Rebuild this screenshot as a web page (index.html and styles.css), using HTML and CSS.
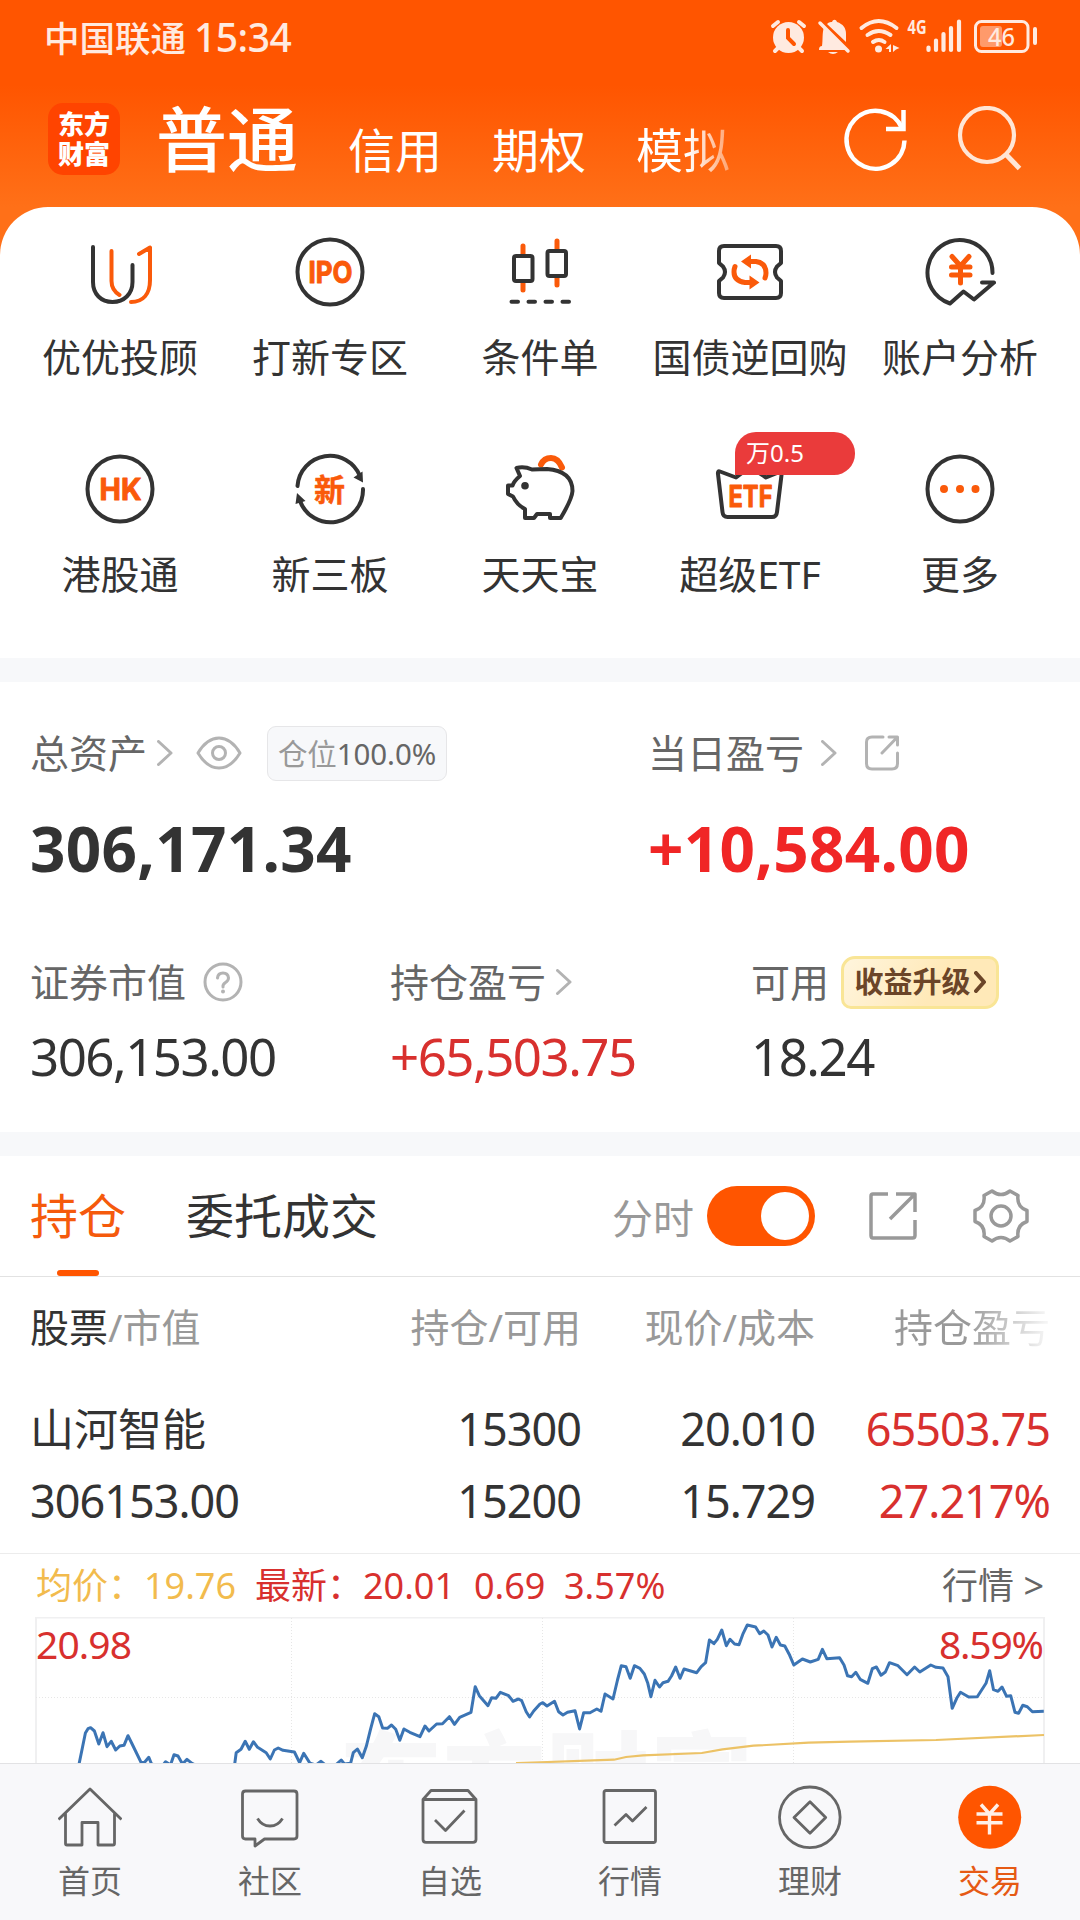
FILE: index.html
```html
<!DOCTYPE html>
<html lang="zh-CN">
<head>
  <meta charset="UTF-8" />
  <meta name="viewport" content="width=device-width, initial-scale=1" />
  <title>交易 - 东方财富</title>
  <link rel="stylesheet" href="styles.css">
</head>
<body>
  <div class="app">
    <div class="status-bar">
      <span class="carrier">中国联通</span>
      <span class="clock">15:34</span>
      <svg class="status-icons" width="272" height="40" viewBox="768 17 272 40" fill="none">
        <!-- alarm -->
        <circle cx="788.5" cy="37.5" r="15.5" fill="#ffeae0" />
        <path d="M773 26l5-4M804 26l-5-4M778 48l-3 3M799 48l3 3" stroke="#ffeae0" stroke-width="4" stroke-linecap="round" />
        <path d="M788 30v8l6 6" stroke="#ff5500" stroke-width="4" stroke-linecap="round" />
        <!-- muted bell -->
        <path d="M822 46c-2 0-3 1-3 4h28L824 27c-2 6-1 13-2 19zM827 24c2-2 4-2 5-2 1-3 4-3 5 0 6 2 9 6 9 12v8z" fill="#ffeae0" />
        <path d="M828 52h10q-5 4-10 0z" fill="#ffeae0" />
        <path d="M820 23l28 28" stroke="#ffeae0" stroke-width="3.5" stroke-linecap="round" />
        <!-- wifi -->
        <path d="M861.5 28q17-14 35 0M867.5 35q11-8 23 0M873 42q6-4 11.5 0" stroke="#ffeae0" stroke-width="4" stroke-linecap="round" />
        <circle cx="878.5" cy="49" r="3.5" fill="#ffeae0" />
        <path d="M885.5 49l5.5-5v8h-2v-3zM893 52v-7l6.5 3-3.500 1.500z" fill="#ffeae0" />
        <!-- signal -->
        <text class="net-type" x="907.5" y="33.5" textLength="19" lengthAdjust="spacingAndGlyphs">4G</text>
        <path d="M928.5 47.5v2.5M936 40.5v9.5M943.5 34v16M951 28v22M959 21.5v28.5" stroke="#ffeae0" stroke-width="4.2" stroke-linecap="round" />
        <!-- battery -->
        <rect x="975.5" y="21.5" width="52.5" height="30" rx="6" stroke="#ffeae0" stroke-width="3" />
        <rect x="980" y="26" width="22" height="21" rx="3" fill="#ff9a6b" />
        <path d="M1035 29v14" stroke="#ffeae0" stroke-width="4" stroke-linecap="round" />
        <text class="battery-level" x="988" y="46" textLength="27" lengthAdjust="spacingAndGlyphs">46</text>
      </svg>
    </div>

    <header class="nav">
      <div class="logo"><span>东方</span><span>财富</span></div>
      <nav class="accounts">
        <a class="account active">普通</a>
        <a class="account">信用</a>
        <a class="account">期权</a>
        <a class="account fade">模拟</a>
      </nav>
      <svg class="nav-icon" width="66" height="66" viewBox="0 0 66 66" fill="none" stroke="#fff" stroke-width="4.5">
        <path d="M61.5 34.5A29 29 0 1 1 59 22" />
        <path d="M60.5 4v19H43" />
      </svg>
      <svg class="nav-icon search" width="66" height="66" viewBox="0 0 66 66" fill="none" stroke="#ffe6d6" stroke-width="4.2">
        <circle cx="31" cy="29" r="27" />
        <path d="M50 48.5L63.5 62.5" stroke-width="5" />
      </svg>
    </header>

    <main>
      <section class="shortcuts">
        <a class="shortcut">
          <svg viewBox="0 0 72 72">
            <path d="M9 11V46C9 58 17 66 28.5 66S48.5 58 48.5 46V29" />
            <path class="hot" d="M27.5 15V45q0 9 8 14M55 18l11-6.5V44c0 14-7 22-19 22" />
          </svg>
          <span>优优投顾</span>
        </a>
        <a class="shortcut">
          <svg viewBox="0 0 72 72">
            <circle cx="36" cy="36" r="32.5" />
            <text x="14.5" y="47" textLength="44" lengthAdjust="spacingAndGlyphs">IPO</text>
          </svg>
          <span>打新专区</span>
        </a>
        <a class="shortcut">
          <svg viewBox="0 0 72 72">
            <path class="hot thick" d="M19 10v9M19 46v8M53 5v9M53 41v8" />
            <rect x="10" y="20" width="18.5" height="25" rx="2" />
            <rect x="43.5" y="15" width="18.5" height="25" rx="2" />
            <path d="M7.5 65.800h6.5M24.5 65.800h6.5M41.5 65.800h6.5M58.5 65.800h6.5" />
          </svg>
          <span>条件单</span>
        </a>
        <a class="shortcut">
          <svg viewBox="0 0 72 72">
            <path d="M10 10H62q5 0 5 5V27l-4 3.5q-4 5.5 0 11L67 45V57q0 5-5 5H10q-5 0-5-5V45l4-3.5q4-5.5 0-11L5 27V15q0-5 5-5z" />
            <path class="hot thick" d="M36 25.5H42Q52 27 52 37q0 2.5-1 5M36 46.5H31Q20 45 20 36q0-3 1-5.5" />
            <path class="hot-fill" d="M27 25.5l10-7v14zM45.500 46.5l-10-7v14z" />
          </svg>
          <span>国债逆回购</span>
        </a>
        <a class="shortcut">
          <svg viewBox="0 0 72 72">
            <path d="M68.5 37A32.5 32.5 0 1 0 26 67.5L39.5 55.5 50 63.5 70 46.5H58" />
            <path class="hot thick" d="M28 20.5L36.5 30 45 20.5M36.5 30V47M27.5 31H46M27.5 39H46" />
          </svg>
          <span>账户分析</span>
        </a>
        <a class="shortcut">
          <svg viewBox="0 0 72 72">
            <circle cx="36" cy="36" r="32.5" />
            <text x="15.5" y="47" textLength="42" lengthAdjust="spacingAndGlyphs">HK</text>
          </svg>
          <span>港股通</span>
        </a>
        <a class="shortcut">
          <svg viewBox="0 0 72 72">
            <path d="M3.5 33A32.5 32.5 0 0 1 66 23M69 36A32.5 32.5 0 0 1 6 48" />
            <path class="arrow" d="M59.500 24.5l9-6 .5 11zM3 40l8.500 8-10 3z" />
            <text class="cjk" x="20" y="47.5">新</text>
          </svg>
          <span>新三板</span>
        </a>
        <a class="shortcut">
          <svg viewBox="0 0 72 72">
            <path class="hot thickest" d="M37 11.500Q40 5 47 5T58 14.5" />
            <path d="M12.5 15Q20 13 28 16.5 34 16 43 16 68.5 18 68.5 38 68 46 56.700 65H46V61H33L30 65H21V56Q13 52 9 43.5L4 41V32.500H8.5Q10 28 16 23z" />
            <circle class="eye" cx="21" cy="32.700" r="3.800" />
          </svg>
          <span>天天宝</span>
        </a>
        <a class="shortcut">
          <svg viewBox="0 0 72 72">
            <path d="M22 24.5L6 18.5Q3.5 17.5 4 21L8.5 59q.5 5 5 5H58q4.5 0 5-5L68 18 52 24.5 36 14z" />
            <text x="14.5" y="53.5" textLength="44" lengthAdjust="spacingAndGlyphs">ETF</text>
          </svg>
          <span>超级ETF</span>
          <em class="badge">万0.5</em>
        </a>
        <a class="shortcut">
          <svg viewBox="0 0 72 72">
            <circle cx="36" cy="36" r="32.5" />
            <path class="hot-fill" d="M16 36a4 4 0 1 0 8 0 4 4 0 1 0-8 0M32 36a4 4 0 1 0 8 0 4 4 0 1 0-8 0M47.5 36a4 4 0 1 0 8 0 4 4 0 1 0-8 0" />
          </svg>
          <span>更多</span>
        </a>
      </section>

      <section class="assets">
        <div class="assets-main">
          <div class="total">
            <div class="label-row">
              <span>总资产</span>
              <svg class="chevron" viewBox="0 0 16 26"><path d="M1.5 1.5L14 13 1.5 24.5" /></svg>
              <svg class="eye-icon" viewBox="0 0 46 34"><path d="M2 17Q11 2 23 2T44 17Q35 32 23 32T2 17z" /><circle cx="23" cy="17" r="6.5" /></svg>
              <span class="position-tag">仓位<b>100.0%</b></span>
            </div>
            <div class="big-number">306,171.34</div>
          </div>
          <div class="today">
            <div class="label-row">
              <span>当日盈亏</span>
              <svg class="chevron wide" viewBox="0 0 16 26"><path d="M1.5 1.5L14 13 1.5 24.5" /></svg>
              <svg class="share-icon" viewBox="0 0 34 36"><path d="M18 2H7Q1.5 2 1.5 7V28.5Q1.5 34 7 34H27Q32.5 34 32.5 28.5V18M24 2H32.5V10M32 2.5L17 18" /></svg>
            </div>
            <div class="big-number up">+10,584.00</div>
          </div>
        </div>
        <div class="assets-detail">
          <div>
            <div class="label-row">
              <span>证券市值</span>
              <svg class="help-icon" viewBox="0 0 40 40"><circle cx="20" cy="20" r="18" /><path d="M14.5 16Q15 11 20 11T25.5 16Q25.5 18.5 22.5 20.5T20 25" /><circle class="dot" cx="20" cy="29.5" r="2" /></svg>
            </div>
            <div class="number">306,153.00</div>
          </div>
          <div>
            <div class="label-row">
              <span>持仓盈亏</span>
              <svg class="chevron" viewBox="0 0 16 26"><path d="M1.5 1.5L14 13 1.5 24.5" /></svg>
            </div>
            <div class="number up">+65,503.75</div>
          </div>
          <div>
            <div class="label-row">
              <span>可用</span>
              <span class="upgrade">收益升级<svg viewBox="0 0 12 22"><path d="M2 2l8 9-8 9" /></svg></span>
            </div>
            <div class="number">18.24</div>
          </div>
        </div>
      </section>

      <section class="holdings">
        <div class="tabs">
          <a class="tab active">持仓</a>
          <a class="tab">委托成交</a>
          <span class="switch-label">分时</span>
          <span class="switch"></span>
          <svg class="tool share" viewBox="0 0 48 48"><path d="M19 2H4Q2 2 2 4V43.5Q2 46 4 46H43.5Q46 46 46 43.5V28M27 2H46V20M45.5 2.5L21 27" /></svg>
          <svg class="tool gear" viewBox="0 0 56 56"><circle cx="28" cy="28" r="10" /><path d="M19 3Q28 10 37 3L45 7.5Q43.5 19 54 22.5V33.5Q43.5 37 45 48.5L37 53Q28 46 19 53L11 48.5Q12.5 37 2 33.5V22.5Q12.5 19 11 7.5z" /></svg>
        </div>

        <div class="row table-head">
          <span><b>股票</b>/市值</span>
          <span>持仓/可用</span>
          <span>现价/成本</span>
          <span class="fade-out">持仓盈亏</span>
        </div>
        <div class="row stock">
          <span class="name">山河智能</span>
          <span>15300</span>
          <span>20.010</span>
          <span class="up">65503.75</span>
          <span>306153.00</span>
          <span>15200</span>
          <span>15.729</span>
          <span class="up">27.217%</span>
        </div>

        <div class="quote">
          <span class="avg">均价：</span><span class="avg val">19.76</span>
          <span class="up">最新：</span><span class="up val">20.01</span>
          <span class="up diff">0.69</span>
          <span class="up pct">3.57%</span>
          <a class="more">行情 &gt;</a>
        </div>
        <div class="chart">
          <svg width="1010" height="146" viewBox="-1 0 1010 146" fill="none">
            <text class="watermark" x="303" y="202" textLength="414">东方财富</text>
            <path d="M0 146V.5H1008V146" stroke="#f0f0f1" stroke-width="2" />
            <path d="M255.5 1V146M506.5 1V146M757.5 1V146M0 80.5H1008" stroke="#e6e6e6" stroke-dasharray="1 2" />
            <polyline class="avg-line" points="480,146 511,145 578,142.7 590,140 607,138.3 665.8,136 686.5,132.3 717.5,128.7 772.6,125.7 814,124.7 900,123 1008,118" />
            <polyline class="price-line" points="43.2,146.3 46.6,129.7 49.4,116 52,111.7 54.6,110.7 58.4,114 62.8,127 67,115.7 71,129.7 75.2,124.3 79.7,133 83.8,129 88,128.3 92,118.7 96.6,128 105.2,145.7 108.6,145.3 112.8,140.3 115.5,147 125.8,149.7 129.6,144.7 134.5,148 138,137.7 142,139 146.5,147 151,142.3 156,146.3 170.6,154 193,154 198.8,146.3 200.2,135.7 205,132.3 209.2,124.3 213.3,132.3 217.4,124.7 221.6,130.3 230.2,135.7 234.3,142 238.4,133 242.2,131 247,133.3 258.4,135 263.6,145.7 267.7,136.3 274,146.3 280,148 285,144.3 289.4,148 299.7,148 305.2,143 308.4,147 314.6,146.3 317.3,135.7 321.4,132 326.3,140.7 330.4,129 334.5,112.3 338.7,96.7 342.8,99.7 346.6,111 351.4,111.3 355.5,108 359.7,112.3 363.8,123.3 367.9,112 373.8,115.3 384,119.7 389,109 393,114 400.6,107 406.5,106.7 413.4,99.7 418.5,107.3 423.7,100.3 435,95.3 439.2,69.7 443.3,78.7 452,88.7 455.7,80.7 459.9,81.3 464.3,75.3 472.6,78.7 477,84.3 482.3,82 485.7,83.7 490.2,94.7 493.6,100 497.7,94 504,87 506.8,85.7 511,89 518.5,84.3 522.6,94.7 527,98 531.5,95.3 539,93.7 543.6,112 547.7,95.7 554,95.7 560.8,92 565,94.3 569,77 577,82 581.5,63 585.3,48.7 590,49.7 594.2,61.3 598.4,48.7 603.9,51.3 608.3,57 611.8,66.3 614.9,79.7 619,63.3 623.5,70 627,65.7 632,64.3 635.5,59 639.7,50 644,61.3 648,52 660.7,55.7 665.2,49.7 669.6,45.7 673.4,23 677.9,26.7 681.3,22.3 685.8,13 690.3,28.7 694,22.3 698.6,27 703,27.7 707.2,16.3 711.3,8 719.6,10 723.7,16.7 727.8,14 732,18 736,30 740.2,20.3 744.4,28 748.8,29 753.7,38.3 757.8,48 766.4,42 774.3,45 782.2,42.3 786.4,32.3 790.8,41.7 803.6,40.7 808,48 811.5,58.7 815.6,59.7 819.8,55.3 824.2,62.3 831.8,66.3 836.3,51.7 840.4,50 845,58.3 849.4,55 853.5,45.7 862,48.7 871,57.7 878.6,50 883.8,55 894.8,48 900,50.3 907,51 912,59.7 916.2,91.3 920.7,81.3 924.5,75.3 932.7,80 941.3,79.7 950,66.3 953.7,53.7 957.5,72.7 962,74.3 966,70 970.6,79.3 974.7,78.7 979,95.3 982.6,96.3 986.8,88.3 991.3,89.7 996.4,94.7 1007.8,94.3" />
            <text class="axis" x="0" y="42" textLength="96">20.98</text>
            <text class="axis" x="903" y="42" textLength="105">8.59%</text>
          </svg>
        </div>
      </section>
    </main>

    <footer class="tabbar">
      <a>
        <svg viewBox="0 0 64 64"><path d="M.5 34.5L32 4 63.5 34.5M7.5 28.5V58.5Q7.5 60 9 60H24V37.5H40V60H55Q56.5 60 56.5 58.5V28.5" /></svg>
        <span>首页</span>
      </a>
      <a>
        <svg viewBox="0 0 64 64"><path d="M7.5 6H56Q59 6 59 9V51Q59 54 56 54H26.5L17 61V54H7.5Q4.5 54 4.5 51V9Q4.5 6 7.5 6zM19.5 33.5Q24 41 32 41T44.5 33.5" /></svg>
        <span>社区</span>
      </a>
      <a>
        <svg viewBox="0 0 64 64"><path d="M5 14.5H58V54.5Q58 57.3 55 57.3H8Q5 57.3 5 54.5V14.5L13 5.5H50L58 14.5M17 35L27.5 45.5 46.5 25.5" /></svg>
        <span>自选</span>
      </a>
      <a>
        <svg viewBox="0 0 64 64"><rect x="6" y="5.5" width="51.5" height="52" rx="2" /><path d="M16.5 40.5L28 29.5 34.5 36 48.5 22" /></svg>
        <span>行情</span>
      </a>
      <a>
        <svg viewBox="0 0 64 64"><circle cx="31.8" cy="32.3" r="30.3" /><path d="M32 16.7L47.7 32.5 32 48.3 16 32.5z" /></svg>
        <span>理财</span>
      </a>
      <a class="active">
        <svg viewBox="0 0 64 64"><circle cx="31.7" cy="32.3" r="31.5" /><path d="M23 19.5L31.5 29 40 19.5M31.5 29V49.5M18.5 29H44.5M18.5 37.8H44.5" /></svg>
        <span>交易</span>
      </a>
    </footer>
  </div>
</body>
</html>
```
FILE: styles.css
```css
:root {
  --orange: #ff5500;
  --red: #d8302e;
  --text: #333333;
  --text-mid: #666666;
  --text-light: #999999;
  --line: #e2e2e2;
  --band: #f7f8fa;
}

* {
  box-sizing: border-box;
}

body {
  margin: 0;
  background: #fff;
  color: var(--text);
  font-family: "Noto Sans", "Noto Sans CJK SC", sans-serif;
}

b,
em {
  font-weight: inherit;
  font-style: normal;
}

.app {
  width: 1080px;
  height: 1920px;
  overflow: hidden;
  display: flex;
  flex-direction: column;
  background: linear-gradient(#ff5500 0, #ff5500 85px, #ff7018 207px, #ff7018 260px);
}

/* status bar */
.status-bar {
  height: 74px;
  padding: 0 40px 0 44px;
  display: flex;
  align-items: center;
  color: #ffeae0;
  line-height: 48px;
}

.carrier {
  width: 150px;
  padding-top: 2px;
  font-size: 35.5px;
  font-weight: 500;
}

.clock {
  font-size: 39px;
  font-weight: 500;
  letter-spacing: -0.5px;
}

.status-icons {
  margin-left: auto;
  overflow: visible;
}

.net-type {
  font-size: 19px;
  font-weight: 700;
  fill: #ffeae0;
}

.battery-level {
  font-size: 26px;
  font-weight: 500;
  fill: #ffeae0;
}

/* top nav */
.nav {
  height: 133px;
  padding: 0 58px 4px 48px;
  display: flex;
  align-items: center;
  color: #fff;
}

.logo {
  width: 72px;
  height: 72px;
  margin-right: 36px;
  border-radius: 15px;
  background: #ff4400;
  display: flex;
  flex-direction: column;
  align-items: center;
  justify-content: center;
  font-size: 26px;
  font-weight: 900;
  line-height: 30px;
}

.accounts {
  flex: 1;
  display: flex;
  align-items: center;
}

.account {
  font-size: 47px;
  line-height: 60px;
  margin-right: 50px;
  padding-top: 22px;
}

.account.active {
  font-size: 71px;
  font-weight: 500;
  line-height: 90px;
  padding-top: 0;
  margin-right: 50px;
}

.account.fade {
  margin-right: 0;
  color: transparent;
  background: linear-gradient(90deg, #fff 55%, rgba(255, 255, 255, 0.4) 100%);
  -webkit-background-clip: text;
  background-clip: text;
}

.nav-icon {
  margin-right: 47px;
}

.nav-icon.search {
  margin-right: 0;
}

main {
  flex: 1;
  min-height: 0;
  display: flex;
  flex-direction: column;
  overflow: hidden;
  background: #fff;
  border-radius: 48px 48px 0 0;
}

/* shortcuts grid */
.shortcuts {
  display: grid;
  grid-template-columns: repeat(5, 210px);
  grid-auto-rows: 217px;
  height: 451px;
  padding: 29px 15px 0;
}

.shortcut {
  position: relative;
  display: flex;
  flex-direction: column;
  align-items: center;
  font-size: 39px;
  line-height: 50px;
  white-space: nowrap;
}

.shortcut svg {
  width: 72px;
  height: 72px;
  margin-bottom: 24px;
  fill: none;
  stroke: #333;
  stroke-width: 4;
  stroke-linecap: round;
  stroke-linejoin: round;
}

.shortcut svg .hot {
  stroke: #fa5a0a;
}

.shortcut svg .thick {
  stroke-width: 5;
}

.shortcut svg .thickest {
  stroke-width: 6;
}

.shortcut svg .hot-fill {
  fill: #fa5a0a;
  stroke: none;
}

.shortcut svg .arrow,
.shortcut svg .eye {
  fill: #333;
  stroke: none;
}

.shortcut svg text {
  fill: #fa5a0a;
  stroke: #fa5a0a;
  stroke-width: 1;
  font-family: Inter, "Noto Sans CJK SC", sans-serif;
  font-size: 30px;
  font-weight: 700;
}

.shortcut svg .cjk {
  font-size: 31px;
  stroke-width: 0.5;
}

.badge {
  position: absolute;
  left: 90px;
  top: -21px;
  width: 120px;
  height: 43px;
  padding-left: 11px;
  border-radius: 21px 21px 21px 0;
  background: #ea3b3b;
  color: #fff;
  font-size: 24px;
  line-height: 42px;
}

/* assets */
.assets {
  height: 498px;
  padding: 44px 30px 0;
  border-top: 24px solid var(--band);
  border-bottom: 24px solid var(--band);
}

.assets-main {
  display: grid;
  grid-template-columns: 618px 1fr;
}

.assets-detail {
  display: grid;
  grid-template-columns: 360px 361px 1fr;
  margin-top: 70px;
}

.label-row {
  display: flex;
  align-items: center;
  height: 54px;
  font-size: 39px;
  line-height: 54px;
  color: var(--text-mid);
}

.assets-detail .label-row {
  height: 52px;
}

.label-row svg {
  fill: none;
  stroke: #b3b3b3;
  stroke-width: 3;
  stroke-linecap: round;
  stroke-linejoin: round;
}

.chevron {
  width: 16px;
  height: 26px;
  margin-left: 10px;
}

.chevron.wide {
  margin-left: 17px;
}

.eye-icon {
  width: 46px;
  height: 34px;
  margin-left: 23px;
}

.share-icon {
  width: 34px;
  height: 36px;
  margin-left: 28px;
}

.help-icon {
  width: 40px;
  height: 40px;
  margin-left: 17px;
}

.label-row .dot {
  fill: #b3b3b3;
  stroke: none;
}

.position-tag {
  width: 180px;
  height: 55px;
  margin-left: 25px;
  border: 1px solid #e6e6e8;
  border-radius: 9px;
  background: var(--band);
  color: var(--text-light);
  font-size: 29.5px;
  line-height: 53px;
  text-align: center;
  letter-spacing: -0.1px;
  white-space: nowrap;
}

.position-tag b {
  color: var(--text-mid);
}

.big-number {
  margin-top: 30px;
  font-size: 62px;
  font-weight: 700;
  line-height: 76px;
  letter-spacing: 0.3px;
}

.number {
  margin-top: 18px;
  font-size: 51px;
  line-height: 60px;
  letter-spacing: -1.5px;
}

.up {
  color: var(--red);
}

.big-number.up {
  color: #f02626;
}

.upgrade {
  width: 158px;
  height: 53px;
  margin-left: 12px;
  display: flex;
  align-items: center;
  justify-content: center;
  border: 3px solid #f9e596;
  border-radius: 14px 10px 14px 10px;
  background: linear-gradient(120deg, #fff5dd, #ffe9b8 60%);
  color: #6b4528;
  font-size: 29px;
  font-weight: 700;
  line-height: 46px;
}

.upgrade svg {
  width: 12px;
  height: 22px;
  margin-left: 3px;
  stroke: #6b4528;
  stroke-width: 4;
}

/* holdings */
.tabs {
  display: flex;
  align-items: center;
  height: 121px;
  padding-left: 30px;
  border-bottom: 1px solid var(--line);
}

.tab {
  position: relative;
  margin-right: 60px;
  font-size: 48px;
  line-height: 122px;
}

.tab.active {
  color: #f55a0c;
}

.tab.active::after {
  content: "";
  position: absolute;
  left: 27px;
  bottom: 1px;
  width: 42px;
  height: 6px;
  border-radius: 3px;
  background: var(--orange);
}

.switch-label {
  margin-left: 174px;
  font-size: 41px;
  color: var(--text-light);
}

.switch {
  width: 108px;
  height: 60px;
  margin-left: 13px;
  padding: 6px;
  border-radius: 30px;
  background: var(--orange);
  display: flex;
  justify-content: flex-end;
}

.switch::after {
  content: "";
  width: 48px;
  height: 48px;
  border-radius: 50%;
  background: #fff;
}

.tool {
  fill: none;
  stroke: var(--text-light);
  stroke-width: 3.5;
  stroke-linejoin: round;
}

.tool.share {
  width: 48px;
  height: 48px;
  margin-left: 54px;
}

.tool.gear {
  width: 56px;
  height: 56px;
  margin-left: 56px;
}

.row {
  display: grid;
  grid-template-columns: 250px 301px 234px 235px;
  padding: 0 30px;
  text-align: right;
}

.row > :nth-child(4n + 1) {
  text-align: left;
}

.table-head {
  font-size: 39px;
  line-height: 100px;
  color: var(--text-light);
}

.table-head b {
  color: var(--text);
}

.fade-out {
  color: transparent;
  background: linear-gradient(90deg, #999 65%, #f4f4f4 98%);
  -webkit-background-clip: text;
  background-clip: text;
}

.stock {
  padding-top: 16px;
  padding-bottom: 16px;
  border-bottom: 1px solid #ececec;
  font-size: 45px;
  line-height: 72px;
  letter-spacing: -1px;
}

.stock .name {
  font-size: 44px;
  letter-spacing: 0;
}

.quote {
  display: flex;
  align-items: center;
  height: 63px;
  padding: 0 36px;
  font-size: 36px;
  line-height: 63px;
  color: var(--text-mid);
}

.quote .avg {
  color: #f2bb4d;
}

.quote .val {
  width: 111px;
}

.diff {
  width: 90px;
}

.more {
  margin-left: auto;
}

.chart {
  height: 146px;
  padding-left: 35px;
}

.chart svg {
  display: block;
}

.watermark {
  font-family: "Noto Sans CJK SC", sans-serif;
  font-size: 103px;
  font-weight: 900;
  fill: #f7f7f8;
}

.price-line {
  stroke: #3b74b4;
  stroke-width: 3;
  stroke-linejoin: round;
}

.avg-line {
  stroke: #ecc266;
  stroke-width: 2.2;
}

.axis {
  fill: var(--red);
  font-size: 39px;
}

/* bottom tab bar */
.tabbar {
  display: grid;
  grid-template-columns: repeat(6, 180px);
  height: 157px;
  padding-top: 21px;
  border-top: 1px solid #e2e2e4;
  background: #f8f8fa;
}

.tabbar a {
  display: flex;
  flex-direction: column;
  align-items: center;
  color: var(--text-mid);
  font-size: 32px;
  line-height: 40px;
}

.tabbar svg {
  width: 64px;
  height: 64px;
  margin-bottom: 12px;
  fill: none;
  stroke: var(--text-mid);
  stroke-width: 2.8;
  stroke-linejoin: round;
}

.tabbar .active {
  color: #e65a14;
}

.tabbar .active circle {
  fill: var(--orange);
  stroke: none;
}

.tabbar .active path {
  stroke: #fff0e8;
  stroke-width: 3.4;
}
```
